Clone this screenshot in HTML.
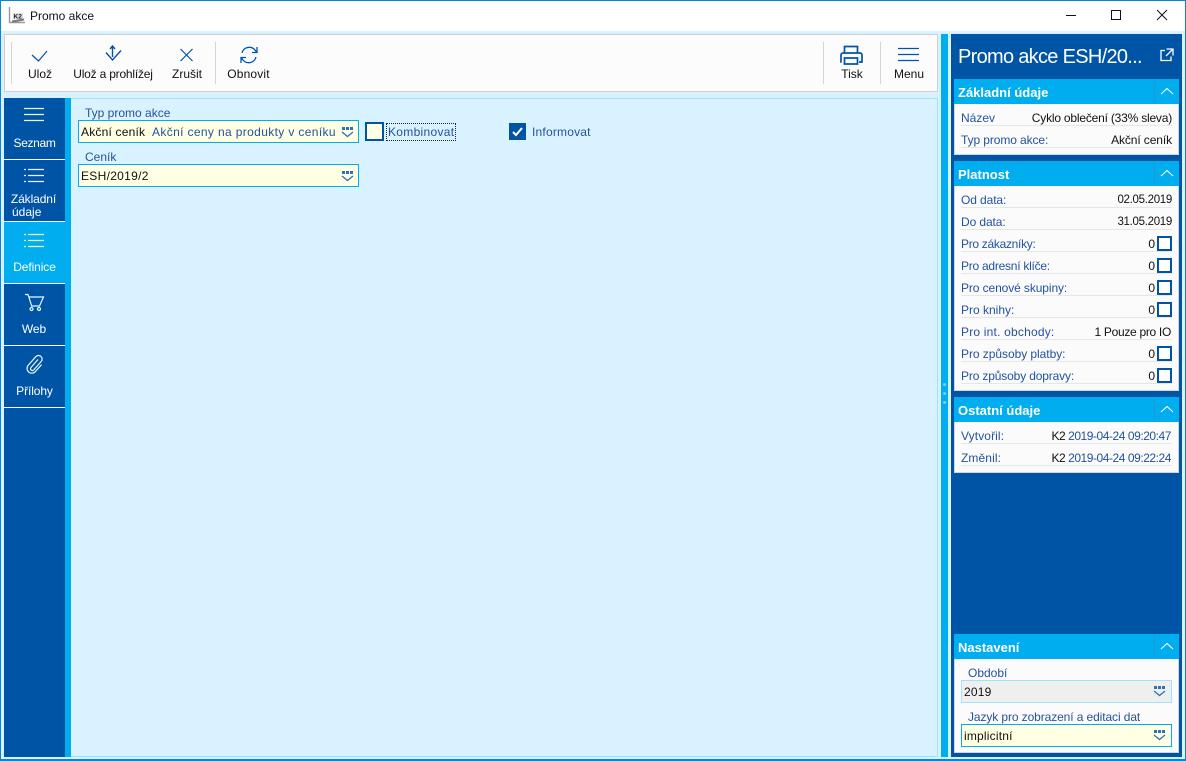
<!DOCTYPE html>
<html lang="cs"><head><meta charset="utf-8"><title>Promo akce</title>
<style>
*{box-sizing:border-box}
html,body{margin:0;padding:0}
body{width:1186px;height:761px;overflow:hidden;position:relative;background:#d9f2ff;font:12px "Liberation Sans",sans-serif;color:#111}
.a{position:absolute}
.t{position:absolute;white-space:nowrap;line-height:14px}
.c{text-align:center;transform:translateX(-50%)}
.r{text-align:right;transform:translateX(-100%)}
.l{color:#23529f}
.w{color:#fff}
.inp{position:absolute;background:#ffffe3;border:1px solid #00adef}
.hd{position:absolute;left:954px;width:225px;height:25px;background:#00adef}
.hd b{position:absolute;left:4px;top:6px;font-size:13px;line-height:15px;color:#fff}
.hd i{position:absolute;left:200px;top:2px;width:1px;height:21px;background:#2a94cf}
.hd svg{position:absolute;left:206px;top:8px}
.bd{position:absolute;left:954px;width:225px;background:#fbfbfb;border:1px solid #d5d5d5;border-top:0}
.sep{position:absolute;left:961px;width:211px;height:1px;background:#e6e6e6}
.cb{position:absolute;left:1157px;width:15px;height:15px;border:2px solid #0054a6;background:#fff}
svg{display:block;overflow:visible}
</style></head><body>
<div class="a" style="left:0;top:0;width:1186px;height:761px;border:1px solid #0a84d8;border-width:1px 1px 2px 1px;z-index:9;pointer-events:none"></div>
<div class="a" style="left:0;top:0;width:1186px;height:31px;background:#fff"></div>
<svg class="a" style="left:9px;top:7px" width="17" height="17" viewBox="0 0 17 17"><path d="M0.5 0v15.5H16" stroke="#999" stroke-width="1.4" fill="none"/><rect x="4" y="6" width="10" height="6" fill="#ddd"/><text x="4.5" y="11.5" font-family="Liberation Sans" font-size="6.5" font-weight="700" fill="#222">K2</text><path d="M3 14.5L15 12.5" stroke="#777" stroke-width="2"/></svg>
<div class="t" style="left:30px;top:9px;color:#111">Promo akce</div>
<svg class="a" style="left:1060px;top:8px" width="116" height="16" viewBox="0 0 116 16" fill="none" stroke="#111" stroke-width="1"><path d="M6 7.5H16"/><rect x="51.5" y="2.5" width="9" height="9"/><path d="M97 2l10 10M107 2L97 12"/></svg>

<div class="a" style="left:4px;top:34px;width:934px;height:58px;background:#fcfcfc;border:1px solid #cfcfcf"></div>
<div class="a" style="left:11px;top:42px;width:1px;height:42px;background:#d4d4d4"></div>
<div class="a" style="left:215px;top:42px;width:1px;height:42px;background:#d4d4d4"></div>
<div class="a" style="left:823px;top:42px;width:1px;height:42px;background:#d4d4d4"></div>
<div class="a" style="left:880px;top:42px;width:1px;height:42px;background:#d4d4d4"></div>
<svg class="a" style="left:0;top:0" width="930" height="70" fill="none" stroke="#0054a6" stroke-width="1.2">
<path d="M32 55l6.5 6L47 51"/>
<path d="M106 52.500l6.500 7.500L121 50.500M112.500 57V46M110 49l2.500-3 2.500 3" stroke-width="1.400"/>
<path d="M180.500 49l12 12M192.500 49l-12 12"/>
<path d="M242 53a7.500 7.500 0 0 1 13-3l1.500 2M257 47v5.500h-5M256 57a7.500 7.500 0 0 1-13 3l-1.500-2M241 63v-5.500h5" stroke-width="1.300"/>
<path d="M844.500 53v-6.500h13V53M841.500 62h-0.500v-7a2 2 0 0 1 2-2h17a2 2 0 0 1 2 2v7h-3M844.500 58h13v6h-13z" stroke-width="1.700"/>
<path d="M898 48.500h21M898 54.500h21M898 60.500h21" stroke-width="1.300"/>
</svg>
<div class="t c" style="left:40px;top:67px">Ulož</div>
<div class="t c" style="left:113px;top:67px;letter-spacing:-.2px">Ulož a prohlížej</div>
<div class="t c" style="left:187px;top:67px">Zrušit</div>
<div class="t c" style="left:248.500px;top:67px;letter-spacing:.15px">Obnovit</div>
<div class="t c" style="left:852px;top:67px">Tisk</div>
<div class="t c" style="left:909px;top:67px">Menu</div>

<div class="a" style="left:4px;top:98px;width:61px;height:659px;background:#0054a6"></div>
<div class="a" style="left:4px;top:222px;width:61px;height:61px;background:#00adef"></div>
<div class="a" style="left:65px;top:98px;width:6px;height:659px;background:#00adef"></div>
<div class="a" style="left:71px;top:98px;width:867px;height:659px;background:#d9f2ff;border:1px solid #9fe2ff;border-left:0"></div>
<div class="a" style="left:4px;top:159px;width:61px;height:1px;background:#fff"></div>
<div class="a" style="left:4px;top:221px;width:61px;height:1px;background:#fff"></div>
<div class="a" style="left:4px;top:283px;width:61px;height:1px;background:#fff"></div>
<div class="a" style="left:4px;top:345px;width:61px;height:1px;background:#fff"></div>
<div class="a" style="left:4px;top:407px;width:61px;height:1px;background:#fff"></div>
<svg class="a" style="left:0;top:0" width="70" height="400" fill="none" stroke="#e8f6ff" stroke-width="1.200">
<path d="M24 108.500h20M24 114.500h20M24 120.500h20"/>
<path d="M28 169.500h16M28 175.500h16M28 181.500h16M24 169.500h2M24 175.500h2M24 181.500h2"/>
<path d="M28 234.500h16M28 240.500h16M28 246.500h16M24 234.500h2M24 240.500h2M24 246.500h2"/>
<path d="M25 294.500h3l3.700 11.500h7.800l4-9H28.500"/><circle cx="31.500" cy="309" r="1.500"/><circle cx="39" cy="309" r="1.500"/>
<path d="M38 359.500l-7 8a1.800 1.800 0 0 0 2.700 2.500l7.500-8.500a3.600 3.600 0 0 0-5.400-4.800l-7.800 8.800a4.800 4.800 0 0 0 7 6.500l6.500-7.300"/>
</svg>
<div class="t c w" style="left:34.500px;top:136px;letter-spacing:-.35px">Seznam</div>
<div class="t c w" style="left:33.500px;top:192px;letter-spacing:-.1px">Základní</div>
<div class="t w" style="left:12px;top:205px">údaje</div>
<div class="t c w" style="left:34.500px;top:260px;letter-spacing:-.1px">Definice</div>
<div class="t c w" style="left:34px;top:322px;letter-spacing:-.1px">Web</div>
<div class="t c w" style="left:34.500px;top:384px;letter-spacing:-.1px">Přílohy</div>

<div class="t l" style="left:85px;top:106px">Typ promo akce</div>
<div class="inp" style="left:78px;top:120px;width:281px;height:23px"></div>
<div class="t" style="left:81px;top:125px;letter-spacing:.2px">Akční ceník</div>
<div class="t l" style="left:152px;top:125px;letter-spacing:.36px">Akční ceny na produkty v ceníku</div>
<div class="t l" style="left:85px;top:150px">Ceník</div>
<div class="inp" style="left:78px;top:164px;width:281px;height:23px"></div>
<div class="t" style="left:81px;top:169px;letter-spacing:.3px">ESH/2019/2</div>
<svg class="a" style="left:0;top:0" width="1186" height="761" fill="none">
<g><path d="M342 127h3v3h-3zM346 127h3v3h-3zM350 127h3v3h-3z" fill="#2f72b4"/><path d="M342 132l5.500 4.500 5.500-4.500" stroke="#2f72b4" stroke-width="1.300"/></g>
<g transform="translate(0 44)"><path d="M342 127h3v3h-3zM346 127h3v3h-3zM350 127h3v3h-3z" fill="#2f72b4"/><path d="M342 132l5.500 4.500 5.500-4.500" stroke="#2f72b4" stroke-width="1.300"/></g>
</svg>
<div class="a" style="left:365px;top:122px;width:19px;height:19px;background:#ffffe3;border:2px solid #0054a6"></div>
<div class="t l" style="left:388px;top:125px;outline:1px dotted #222;outline-offset:1px;letter-spacing:.3px">Kombinovat</div>
<div class="a" style="left:509px;top:123px;width:17px;height:17px;background:#0054a6"></div>
<svg class="a" style="left:509px;top:123px" width="17" height="17" fill="none"><path d="M4 9l3 3 6-7" stroke="#fff" stroke-width="2"/></svg>
<div class="t l" style="left:532px;top:125px;letter-spacing:.2px">Informovat</div>

<div class="a" style="left:941px;top:34px;width:7px;height:723px;background:#00adef"></div>
<div class="a" style="left:943px;top:383px;width:3px;height:3px;border-radius:50%;background:#7fd0f5"></div>
<div class="a" style="left:943px;top:392px;width:3px;height:3px;border-radius:50%;background:#7fd0f5"></div>
<div class="a" style="left:943px;top:401px;width:3px;height:3px;border-radius:50%;background:#7fd0f5"></div>
<div class="a" style="left:951px;top:34px;width:231px;height:723px;background:#0054a6"></div>
<div class="t" style="left:958px;top:44px;font-size:20px;line-height:26px;color:#fff;letter-spacing:-.7px">Promo akce ESH/20...</div>
<svg class="a" style="left:1160px;top:48px" width="14" height="14" fill="none" stroke="#fff" stroke-width="1.300"><path d="M5 2.500H1v10h10V8.500M6.500 1H13v6.500M13 1L6 8"/></svg>

<div class="hd" style="top:79px"><b>Základní údaje</b><i></i><svg width="14" height="8" fill="none" stroke="#fff" stroke-width="1.100"><path d="M1 7l6-5.500L13 7"/></svg></div>
<div class="bd" style="top:104px;height:51px"></div>
<div class="t l" style="left:961px;top:111px">Název</div>
<div class="t r" style="left:1172px;top:111px;letter-spacing:-.2px">Cyklo oblečení (33% sleva)</div>
<div class="sep" style="top:125px"></div>
<div class="t l" style="left:961px;top:133px;letter-spacing:-.1px">Typ promo akce:</div>
<div class="t r" style="left:1172px;top:133px;letter-spacing:-.1px">Akční ceník</div>
<div class="sep" style="top:147px"></div>

<div class="hd" style="top:161px"><b>Platnost</b><i></i><svg width="14" height="8" fill="none" stroke="#fff" stroke-width="1.100"><path d="M1 7l6-5.500L13 7"/></svg></div>
<div class="bd" style="top:186px;height:205px"></div>
<div class="t l" style="left:961px;top:193px;letter-spacing:-.1px">Od data:</div><div class="t r" style="left:1172px;top:193px;font-size:11.500px;letter-spacing:-.3px">02.05.2019</div><div class="sep" style="top:207px"></div>
<div class="t l" style="left:961px;top:215px;letter-spacing:-.1px">Do data:</div><div class="t r" style="left:1172px;top:215px;font-size:11.500px;letter-spacing:-.3px">31.05.2019</div><div class="sep" style="top:229px"></div>
<div class="t l" style="left:961px;top:237px;letter-spacing:-.3px">Pro zákazníky:</div><div class="t r" style="left:1155px;top:237px">0</div><div class="cb" style="top:236px"></div><div class="sep" style="top:251px"></div>
<div class="t l" style="left:961px;top:259px;letter-spacing:-.25px">Pro adresní klíče:</div><div class="t r" style="left:1155px;top:259px">0</div><div class="cb" style="top:258px"></div><div class="sep" style="top:273px"></div>
<div class="t l" style="left:961px;top:281px;letter-spacing:-.1px">Pro cenové skupiny:</div><div class="t r" style="left:1155px;top:281px">0</div><div class="cb" style="top:280px"></div><div class="sep" style="top:295px"></div>
<div class="t l" style="left:961px;top:303px">Pro knihy:</div><div class="t r" style="left:1155px;top:303px">0</div><div class="cb" style="top:302px"></div><div class="sep" style="top:317px"></div>
<div class="t l" style="left:961px;top:325px;letter-spacing:.2px">Pro int. obchody:</div><div class="t r" style="left:1171px;top:325px;letter-spacing:-.3px">1 Pouze pro IO</div><div class="sep" style="top:339px"></div>
<div class="t l" style="left:961px;top:347px;letter-spacing:-.05px">Pro způsoby platby:</div><div class="t r" style="left:1155px;top:347px">0</div><div class="cb" style="top:346px"></div><div class="sep" style="top:361px"></div>
<div class="t l" style="left:961px;top:369px;letter-spacing:-.15px">Pro způsoby dopravy:</div><div class="t r" style="left:1155px;top:369px">0</div><div class="cb" style="top:368px"></div><div class="sep" style="top:383px"></div>

<div class="hd" style="top:397px"><b>Ostatní údaje</b><i></i><svg width="14" height="8" fill="none" stroke="#fff" stroke-width="1.100"><path d="M1 7l6-5.500L13 7"/></svg></div>
<div class="bd" style="top:422px;height:51px"></div>
<div class="t l" style="left:961px;top:429px;letter-spacing:.1px">Vytvořil:</div>
<div class="t r" style="left:1171px;top:429px;letter-spacing:-.45px">K2 <span class="l">2019-04-24 09:20:47</span></div><div class="sep" style="top:443px"></div>
<div class="t l" style="left:961px;top:451px;letter-spacing:.1px">Změnil:</div>
<div class="t r" style="left:1171px;top:451px;letter-spacing:-.45px">K2 <span class="l">2019-04-24 09:22:24</span></div><div class="sep" style="top:465px"></div>

<div class="hd" style="top:634px"><b>Nastavení</b><i></i><svg width="14" height="8" fill="none" stroke="#fff" stroke-width="1.100"><path d="M1 7l6-5.500L13 7"/></svg></div>
<div class="bd" style="top:659px;height:94px"></div>
<div class="t l" style="left:968px;top:666px">Období</div>
<div class="a" style="left:961px;top:680px;width:211px;height:23px;background:#efefef;border:1px solid #9fe2ff"></div>
<div class="t" style="left:964px;top:685px;letter-spacing:.2px">2019</div>
<div class="t l" style="left:968px;top:710px;letter-spacing:-.1px">Jazyk pro zobrazení a editaci dat</div>
<div class="inp" style="left:961px;top:724px;width:211px;height:23px"></div>
<div class="t" style="left:964px;top:729px;letter-spacing:.2px">implicitní</div>
<svg class="a" style="left:0;top:0;z-index:5" width="1186" height="761" fill="none">
<g transform="translate(812 559)"><path d="M342 127h3v3h-3zM346 127h3v3h-3zM350 127h3v3h-3z" fill="#2f72b4"/><path d="M342 132l5.500 4.500 5.500-4.500" stroke="#2f72b4" stroke-width="1.300"/></g>
<g transform="translate(812 603)"><path d="M342 127h3v3h-3zM346 127h3v3h-3zM350 127h3v3h-3z" fill="#2f72b4"/><path d="M342 132l5.500 4.500 5.500-4.500" stroke="#2f72b4" stroke-width="1.300"/></g>
</svg>
</body></html>
